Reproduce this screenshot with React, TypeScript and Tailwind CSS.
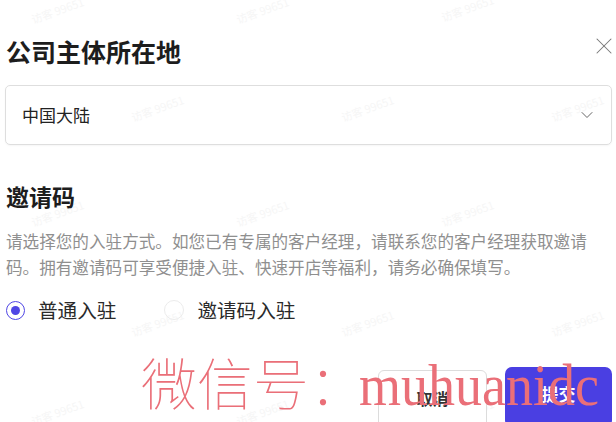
import { X, ChevronDown } from "lucide-react";

const marks = [
  { top: 2, left: 30 }, { top: 2, left: 235 }, { top: 0, left: 440 },
  { top: 100, left: 130 }, { top: 100, left: 340 }, { top: 100, left: 550 },
  { top: 205, left: 30 }, { top: 205, left: 235 }, { top: 205, left: 440 },
  { top: 315, left: 130 }, { top: 315, left: 340 }, { top: 315, left: 550 },
  { top: 404, left: 30 }, { top: 404, left: 235 }, { top: 404, left: 440 },
];

const Radio = ({ checked, label }: { checked: boolean; label: string }) => (
  <label className="flex items-center gap-[13px] cursor-pointer">
    <span
      className={
        checked
          ? "w-[19px] h-[19px] rounded-full border-[1.5px] border-[#4f46e5] flex items-center justify-center"
          : "w-[20px] h-[20px] rounded-full border-[1.5px] border-[#ececec] flex items-center justify-center"
      }
    >
      {checked ? <span className="w-[9px] h-[9px] rounded-full bg-[#4f46e5]" /> : null}
    </span>
    <span className="text-[19.6px] leading-[24px] text-[#2a2a2a]">{label}</span>
  </label>
);

const App = () => {
  return (
    <div className="relative w-[616px] h-[422px] overflow-hidden bg-white font-['Noto_Sans_CJK_SC',sans-serif]">
      {marks.map((m, i) => (
        <span
          key={i}
          className="absolute text-[11px] text-[#f6f6f6] -rotate-[20deg] pointer-events-none select-none"
          style={{ top: m.top, left: m.left }}
        >
          访客 99651
        </span>
      ))}

      <div className="relative flex flex-col pl-[6px] pr-[4px] pt-[37px]">
        <div className="flex items-center justify-between">
          <h1 className="text-[25px] leading-[28px] font-bold text-[#1d1d1d]">公司主体所在地</h1>
          <X className="w-[28px] h-[28px] text-[#777] mr-[-6px] mt-[-10px]" strokeWidth={0.9} />
        </div>

        <div className="mt-[20px] ml-[-1px] h-[60px] border border-[#dedede] rounded-[5px] flex items-center justify-between pl-[16px] pr-[14px] shadow-[0_1px_2px_rgba(0,0,0,0.04)]">
          <span className="text-[17px] text-[#222]">中国大陆</span>
          <ChevronDown className="w-[20px] h-[20px] text-[#666]" strokeWidth={1.2} />
        </div>

        <h2 className="mt-[38px] text-[23px] leading-[26px] font-bold text-[#1d1d1d]">邀请码</h2>

        <p className="mt-[19px] text-[16.6px] leading-[26px] text-[#8f8f8f]">
          请选择您的入驻方式。如您已有专属的客户经理，请联系您的客户经理获取邀请
          <br />
          码。拥有邀请码可享受便捷入驻、快速开店等福利，请务必确保填写。
        </p>

        <div className="mt-[18px] flex items-center gap-[48px]">
          <Radio checked label="普通入驻" />
          <Radio checked={false} label="邀请码入驻" />
        </div>
      </div>

      <div className="absolute top-[367px] right-[4px] flex gap-[18px]">
        <button className="mt-[3px] w-[109px] h-[60px] border border-[#dcdcdc] rounded-[6px] bg-white text-[16px] font-bold text-[#333] pb-[4px]">
          取消
        </button>
        <button className="w-[107px] h-[60px] rounded-[7px] bg-[#4a3fe2] text-[17px] font-bold text-white pb-[6px]">
          提交
        </button>
      </div>

      <div className="absolute left-[141px] top-[346px] flex items-baseline text-[#ea6f78] pointer-events-none select-none whitespace-nowrap">
        <span className="text-[56px] leading-[70px] font-thin font-['Noto_Sans_CJK_SC',serif]">微信号：</span>
        <span className="text-[60px] leading-[70px] font-['Liberation_Serif',serif] ml-[-6px] inline-block origin-left scale-x-[0.9]">
          muhuanidc
        </span>
      </div>
    </div>
  );
};

export default App;
